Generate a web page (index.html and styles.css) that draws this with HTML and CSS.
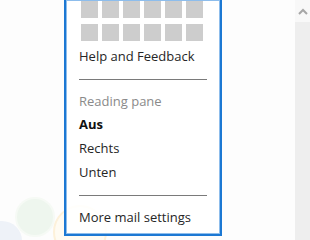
FILE: index.html
```html
<!DOCTYPE html>
<html lang="en">
<head>
    <meta charset="UTF-8">
    <meta name="viewport" content="width=device-width, initial-scale=1.0">
    <title>Mail options</title>
    <link rel="stylesheet" href="styles.css">
</head>
<body>
    <div class="page">
        <div class="backdrop">
            <div class="bubble bubble-green"></div>
            <div class="bubble bubble-blue"></div>
            <div class="bubble bubble-orange"></div>

            <div class="menu">
                <div class="tiles">
                    <span></span><span></span><span></span><span></span><span></span><span></span>
                    <span></span><span></span><span></span><span></span><span></span><span></span>
                </div>

                <div class="item">Help and Feedback</div>

                <hr class="divider">

                <div class="item label">Reading pane</div>
                <div class="item selected">Aus</div>
                <div class="item">Rechts</div>
                <div class="item">Unten</div>

                <hr class="divider">

                <div class="item">More mail settings</div>
            </div>
        </div>

        <div class="scrollbar">
            <div class="scroll-up">
                <svg width="10" height="7" viewBox="0 0 10 7">
                    <path d="M1 6 L5 2 L9 6" fill="none" stroke="#a6a6a6" stroke-width="2"/>
                </svg>
            </div>
        </div>
    </div>
</body>
</html>
```

FILE: styles.css
```css
body {
    margin: 0;
    font-family: 'Open Sans', sans-serif;
    background: #fff;
    color: #262626;
}

.page {
    display: flex;
    width: 310px;
    height: 240px;
    overflow: hidden;
}

.backdrop {
    position: relative;
    flex: 1;
    background: #fdfdfd;
}

.bubble {
    position: absolute;
    border-radius: 50%;
}

.bubble-green {
    left: 15px;
    top: 197px;
    width: 36px;
    height: 36px;
    background: #eef6ee;
    border: 2px solid #f6faf5;
}

.bubble-blue {
    left: -18px;
    top: 221px;
    width: 40px;
    height: 40px;
    background: #eef2f8;
}

.bubble-orange {
    left: 53px;
    top: 205px;
    width: 50px;
    height: 50px;
    background: #fffbf2;
    border: 2px solid #fdf1da;
}

.menu {
    position: relative;
    box-sizing: border-box;
    width: 158px;
    height: 236px;
    margin-left: 64px;
    padding: 0 13px;
    background: rgba(255, 255, 255, 0.88);
    border: 2px solid #1c78d3;
    border-top: none;
    box-shadow: inset 0 0 0 1px #8dbdec;
}

.tiles {
    display: grid;
    grid-template-columns: repeat(6, 17px);
    grid-auto-rows: 17px;
    column-gap: 4px;
    row-gap: 6px;
    padding: 1px 0 0 2px;
    margin-bottom: 3px;
}

.tiles span {
    background: #cdcdcd;
}

.item {
    font-size: 13px;
    line-height: 24px;
    white-space: nowrap;
}

.label {
    color: #8a8a8a;
}

.selected {
    font-weight: 700;
    color: #111;
    line-height: 23px;
}

.divider {
    margin: 11px 0 9px;
    border: none;
    border-top: 1px solid #7a7a7a;
}

.scrollbar {
    width: 15px;
    background: #eeeeee;
}

.scroll-up {
    display: flex;
    justify-content: center;
    align-items: center;
    height: 22px;
    background: #f8f8f8;
}
```
